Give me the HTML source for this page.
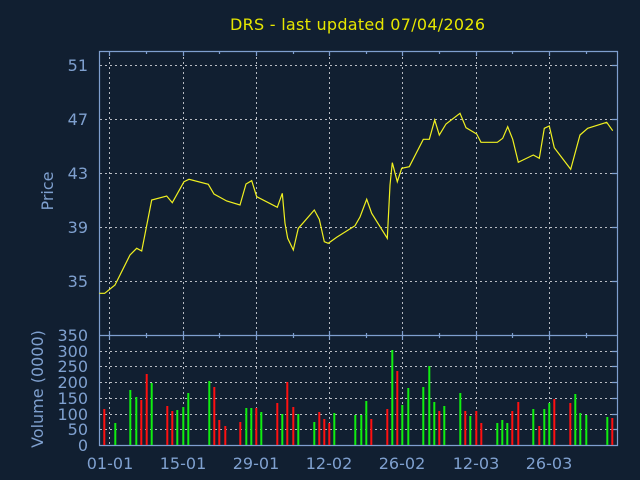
<!DOCTYPE html>
<html><head><meta charset="utf-8"><style>
html,body{margin:0;padding:0;background:#111f31;}
svg{display:block}
text{font-family:"DejaVu Sans","Liberation Sans",sans-serif;}
</style></head><body>
<svg width="640" height="480" viewBox="0 0 640 480" xmlns="http://www.w3.org/2000/svg">
<rect width="640" height="480" fill="#111f31"/>
<text x="230" y="30" font-size="16" fill="#e6e600" textLength="255">DRS - last updated 07/04/2026</text>
<g stroke="#b8bcc4" stroke-width="1" stroke-dasharray="2,3" fill="none">
<path d="M100 65.5H617M100 119.5H617M100 173.5H617M100 227.5H617M100 281.5H617"/>
<path d="M100 351.5H617M100 366.5H617M100 382.5H617M100 398.5H617M100 414.5H617M100 429.5H617"/>
<path d="M109.5 52V445M183.5 52V445M256.5 52V445M329.5 52V445M402.5 52V445M476.5 52V445M549.5 52V445"/>
</g>
<g stroke="#7f9fcf" stroke-width="1.2" fill="none">
<path d="M99.5 51.5H617.5V445.5H99.5Z"/>
<path d="M99.5 335.5H617.5"/>
<path d="M109.5 51V56M183.5 51V56M256.5 51V56M329.5 51V56M402.5 51V56M476.5 51V56M549.5 51V56M146.5 51V54M219.5 51V54M293.5 51V54M366.5 51V54M439.5 51V54M512.5 51V54M586.5 51V54"/>
<path d="M109.5 331V340M183.5 331V340M256.5 331V340M329.5 331V340M402.5 331V340M476.5 331V340M549.5 331V340M146.5 333V338M219.5 333V338M293.5 333V338M366.5 333V338M439.5 333V338M512.5 333V338M586.5 333V338"/>
<path d="M612 65.5H617M612 119.5H617M612 173.5H617M612 227.5H617M612 281.5H617M612 351.5H617M612 366.5H617M612 382.5H617M612 398.5H617M612 414.5H617M612 429.5H617"/>
</g>
<polyline fill="none" stroke="#f0f020" stroke-width="1.2" points="99.3,293.3 104.7,293.3 115,285 130,255 136.7,248.3 141.7,251 151.7,200 166.7,196 172.3,202.7 184,181.7 189,179.3 208.3,184.3 214,194 226.7,201 240,205 246,184 251.7,180.7 256.7,196.7 277.3,207.3 282.3,193.3 285,223.3 287.7,238.3 293.3,250 298.3,228.3 303.3,222.7 314.3,210 319.3,219.3 324.3,241.7 328.3,243.3 336.7,237.3 355,225.7 360,217 366.7,199.3 371.7,213.3 387.3,238.3 390,185 392.3,162.7 397.3,181.7 401.7,168.3 409.3,166.7 423.3,139.3 429.3,139.3 434.7,120 439.3,135 446,124 460,113.3 466,127.7 476.7,134 481,142.3 497.3,142.3 502.7,138.3 507.7,126.7 512.7,139.3 518.3,162.3 533.3,155 539.3,158.3 544.3,128.3 549.3,126 554.3,147.7 570.7,169.3 580,135 587.7,128.3 606.7,122.3 612.7,130.7"/>
<g stroke-width="2">
<g stroke="#ff1010">
<path d="M104.3 409V445M141.3 400V445M146.7 374V445M167.3 406V445M172.3 411V445M214.3 387V445M219.3 420V445M225.3 426V445M240.3 422V445M256.3 408V445M277.3 403V445M287.3 382V445M293.3 407V445M319.3 412V445M324.3 419V445M329.3 423V445M371.3 419V445M387.3 409V445M397.3 371V445M439.3 411V445M465.3 411V445M476.3 411V445M481.3 423V445M512.3 411V445M518.3 402V445M539.3 426V445M554.3 399V445M570.3 403V445M612.3 418V445"/>
</g>
<g stroke="#10ee10">
<path d="M115.3 423V445M130.3 390V445M136.3 397V445M151.7 383V445M177.3 410V445M183.3 407V445M188.3 393V445M209.3 381V445M246.3 408V445M251.3 408V445M261.3 412V445M282.3 414V445M298.3 414V445M314.3 422V445M334.3 413V445M355.3 415V445M361.3 415V445M366.3 401V445M392.3 350V445M402.3 405V445M408.3 388V445M423.3 387V445M429.3 366V445M434.3 402V445M444.3 406V445M460.3 393V445M470.3 416V445M497.3 423V445M502.3 420V445M507.3 423V445M533.3 409V445M544.3 409V445M549.3 403V445M575.3 394V445M580.3 413V445M586.3 415V445M607.3 417V445"/>
</g>
</g>
<g fill="#7fa0cf" font-size="16" text-anchor="end">
<text x="88" y="71">51</text><text x="88" y="125">47</text><text x="88" y="179">43</text><text x="88" y="233">39</text><text x="88" y="287">35</text>
<text x="88" y="341">350</text><text x="88" y="357">300</text><text x="88" y="372">250</text><text x="88" y="388">200</text><text x="88" y="404">150</text><text x="88" y="420">100</text><text x="88" y="435">50</text><text x="88" y="451">0</text>
</g>
<g fill="#7fa0cf" font-size="16" text-anchor="middle">
<text x="110" y="469">01-01</text><text x="183" y="469">15-01</text><text x="256" y="469">29-01</text><text x="329" y="469">12-02</text><text x="402" y="469">26-02</text><text x="476" y="469">12-03</text><text x="549" y="469">26-03</text>
</g>
<text transform="translate(53,191) rotate(-90)" fill="#7fa0cf" font-size="16" text-anchor="middle">Price</text>
<text transform="translate(43,389) rotate(-90)" fill="#7fa0cf" font-size="16" text-anchor="middle">Volume (0000)</text>
</svg>
</body></html>
